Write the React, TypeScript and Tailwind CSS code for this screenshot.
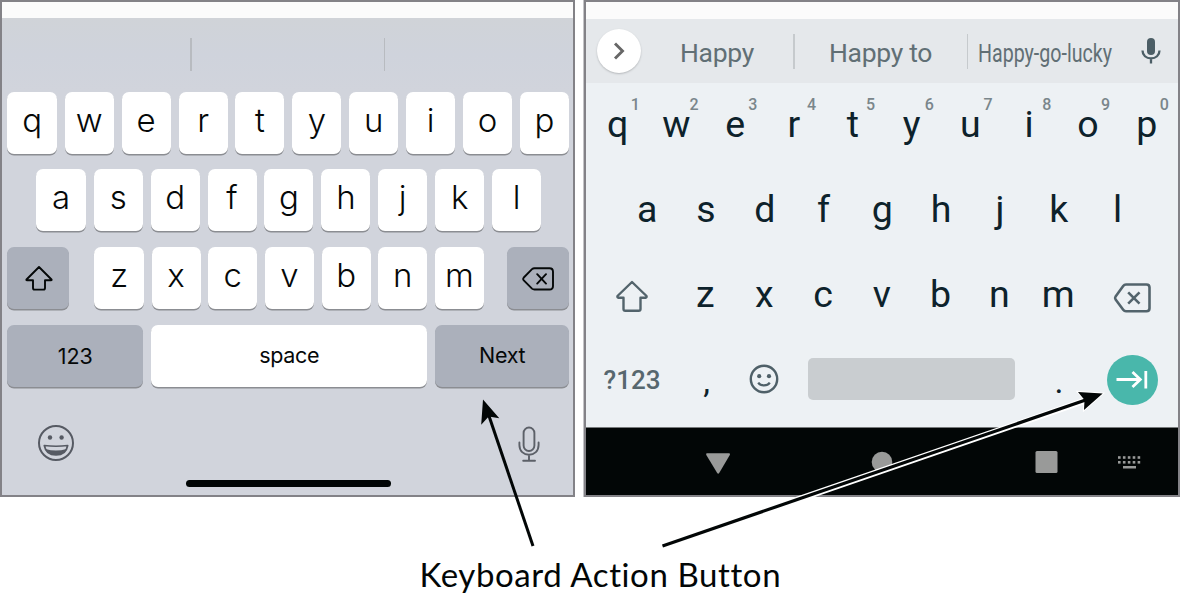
import React from "react";

type KeyProps = { children: React.ReactNode; className?: string; tone?: string };

function IosKey({ children, className = "", tone = "bg-white" }: KeyProps) {
  return (
    <div
      className={`h-[62px] shrink-0 rounded-[7px] text-center text-[#050808] shadow-[0_1.5px_0_#8b8d92] ${tone} ${className}`}
    >
      {children}
    </div>
  );
}

function IosLetter({ letter }: { letter: string }) {
  return (
    <IosKey className="w-[49px] text-[33px] leading-[57px] font-[350] first:w-[49.5px]">{letter}</IosKey>
  );
}

function IosKeyboard() {
  return (
    <section className="flex h-[497px] w-[575px] shrink-0 flex-col border-2 border-[#838287] bg-[#d1d4dc] font-['Inter',sans-serif]">
      <div className="h-4 shrink-0 bg-[#fbfbfb]" />
      <div className="flex h-[73.5px] shrink-0 bg-linear-to-b from-[#d0d3d8] via-[#cfd3dc] to-[#d1d4dc] pt-5 pl-[188px]">
        <div className="h-[33px] w-[1.5px] bg-[#b8bbc0]" />
        <div className="ml-[192px] h-[33px] w-[1.5px] bg-[#b8bbc0]" />
      </div>
      <div className="flex gap-[7.9px] pl-[5.4px]">
        {"qwertyuiop".split("").map((c) => (
          <IosLetter key={c} letter={c} />
        ))}
      </div>
      <div className="mt-[15.5px] flex gap-[7.9px] pl-[34.4px]">
        {"asdfghjkl".split("").map((c) => (
          <IosLetter key={c} letter={c} />
        ))}
      </div>
      <div className="mt-[15.5px] flex pl-[5.4px]">
        <IosKey tone="bg-[#abb0bb]" className="flex w-[62px] items-center justify-center">
          <svg width="28" height="25" viewBox="0 0 28 25" fill="none" stroke="#050808" strokeWidth="1.9" strokeLinejoin="round" className="mt-0.5 ml-0.5">
            <path d="M14 1 L26.5 13.5 Q27 14.3 26 14.3 H20 V22 Q20 23.6 18.4 23.6 H9.6 Q8 23.6 8 22 V14.3 H2 Q1 14.3 1.5 13.5 Z" />
          </svg>
        </IosKey>
        <div className="ml-[25px] flex gap-[7.7px]">
          {"zxcvbnm".split("").map((c) => (
            <IosLetter key={c} letter={c} />
          ))}
        </div>
        <IosKey tone="bg-[#abb0bb]" className="ml-[23.3px] flex w-[62px] items-center justify-center">
          <svg width="32" height="24" viewBox="0 0 32 24" fill="none" stroke="#050808" strokeWidth="1.9" strokeLinejoin="round" strokeLinecap="round" className="mt-0.5">
            <path d="M12.5 1.2 H27.5 Q31 1.2 31 4.7 V19 Q31 22.5 27.5 22.5 H12.5 Q11 22.5 10 21.6 L1.8 13.3 Q0.6 11.9 1.8 10.5 L10 2.1 Q11 1.2 12.5 1.2 Z M15.2 7.2 L24 16.6 M24 7.2 L15.2 16.6" />
          </svg>
        </IosKey>
      </div>
      <div className="mt-[16px] flex gap-2 pl-[5.4px] text-[21.5px]">
        <IosKey tone="bg-[#abb0bb]" className="w-[135.8px] leading-[62px]">123</IosKey>
        <IosKey className="w-[276px] leading-[60px] tracking-[-0.3px]">space</IosKey>
        <IosKey tone="bg-[#abb0bb]" className="w-[134px] leading-[60px] tracking-[-0.3px]">Next</IosKey>
      </div>
      <div className="flex shrink-0 justify-between pt-9 pr-[33px] pl-[35px]">
        <svg width="38" height="38" viewBox="0 0 38 38" fill="none" stroke="#565a63" strokeWidth="2" className="mt-px">
          <circle cx="19" cy="19" r="17" />
          <circle cx="13" cy="13.5" r="2.2" fill="#565a63" stroke="none" />
          <circle cx="24.6" cy="13.5" r="2.2" fill="#565a63" stroke="none" />
          <path d="M7.3 21.5 Q19 23 30.7 21.5 C29.5 28 25 31 19 31 C13 31 8.5 28 7.3 21.5 Z" strokeWidth="1.7" strokeLinejoin="round" />
          <path d="M8.5 25 Q19 28.2 29.5 25 C27.5 29.5 24 31 19 31 C14 31 10.5 29.5 8.5 25 Z" fill="#565a63" stroke="none" />
        </svg>
        <svg width="22" height="38" viewBox="0 0 22 38" fill="none" stroke="#5c6068" strokeWidth="1.9" strokeLinecap="round" className="mt-[3px]">
          <rect x="5.6" y="1.5" width="10.8" height="23.5" rx="5.4" />
          <path d="M1.4 16.5 V19 C1.4 25 5.5 28.7 11 28.7 C16.5 28.7 20.6 25 20.6 19 V16.5 M11 28.7 V34.7 M5.2 34.7 H17" />
        </svg>
      </div>
      <div className="mt-[16px] ml-[184px] h-[7px] w-[205px] shrink-0 rounded-full bg-[#020606]" />
    </section>
  );
}

function AndroidLetter({ letter, hint }: { letter: string; hint?: string }) {
  return (
    <div className="relative w-[58.8px] shrink-0 text-center text-[37.5px] leading-[44px]">
      {letter}
      {hint && (
        <span className="absolute top-[-19px] left-[42.5px] text-[16px] font-medium text-[#7a868b]">
          {hint}
        </span>
      )}
    </div>
  );
}

function AndroidKeyboard() {
  return (
    <section className="flex h-[497px] w-[596px] shrink-0 flex-col border-2 border-[#838287] bg-[#edf1f4] font-['Roboto',sans-serif] text-[#0d222b] shadow-[-1px_0_0_#c4c4c7]">
      <div className="h-[17px] shrink-0 bg-[#fbfbfb]" />
      <div className="flex h-16 shrink-0 bg-[#e5e8eb] text-[26.5px] leading-[67px] whitespace-nowrap text-[#616f75]">
        <div className="mt-[10px] ml-[11px] flex size-[44px] shrink-0 items-center justify-center rounded-full bg-white shadow-[0_1px_2px_#b5b8bb]">
          <svg width="12" height="18" viewBox="0 0 12 18" fill="none" stroke="#676767" strokeWidth="2.9">
            <path d="M2 1.5 L9.5 9 L2 16.5" />
          </svg>
        </div>
        <div className="w-[152px] shrink-0 text-center tracking-[-0.3px]">Happy</div>
        <div className="mt-[15px] h-[35px] w-[1.5px] shrink-0 bg-[#c6cacd]" />
        <div className="w-[172px] shrink-0 text-center tracking-[-0.3px]">Happy to</div>
        <div className="mt-[15px] h-[35px] w-[1.5px] shrink-0 bg-[#c6cacd]" />
        <div className="ml-[10px] w-[134px] shrink-0 origin-left scale-x-[0.74]">Happy-go-lucky</div>
        <svg width="20" height="27" viewBox="0 0 20 27" fill="none" stroke="#4c5e66" strokeWidth="2.3" className="mt-[18px] ml-[29px] shrink-0">
          <rect x="6" y="1" width="8" height="17" rx="4" fill="#4c5e66" stroke="none" />
          <path d="M1.5 13.5 C1.5 18.3 5.2 21.4 10 21.4 C14.8 21.4 18.5 18.3 18.5 13.5 M10 21 V26.5" />
        </svg>
      </div>
      <div className="mt-[19px] flex h-[44px] shrink-0 pl-[2.2px]">
        {"qwertyuiop".split("").map((c, i) => (
          <AndroidLetter key={c} letter={c} hint={String((i + 1) % 10)} />
        ))}
      </div>
      <div className="mt-[41px] flex h-[44px] shrink-0 pl-[31.8px]">
        {"asdfghjkl".split("").map((c) => (
          <AndroidLetter key={c} letter={c} />
        ))}
      </div>
      <div className="mt-[41px] flex h-[44px] shrink-0 pl-[29.5px]">
        <svg width="34" height="33" viewBox="0 0 34 33" fill="none" stroke="#53646c" strokeWidth="2.4" strokeLinejoin="round" className="mt-[8px] -ml-px">
          <path d="M17 2 L31.5 16 Q32 17.5 30.5 17.8 H25.5 V29 Q25.5 30.8 23.7 30.8 H10.3 Q8.5 30.8 8.5 29 V17.8 H3.5 Q2 17.5 2.5 16 Z" />
        </svg>
        <div className="ml-[27.5px] flex">
          {"zxcvbnm".split("").map((c) => (
            <AndroidLetter key={c} letter={c} />
          ))}
        </div>
        <svg width="38" height="30" viewBox="0 0 38 30" fill="none" stroke="#53646c" strokeWidth="2.6" strokeLinejoin="round" className="mt-[11px] ml-[25.8px]">
          <path d="M13 1.5 H33.5 Q36.5 1.5 36.5 4.5 V25.3 Q36.5 28.3 33.5 28.3 H13 Q11.3 28.3 10.2 26.8 L2.6 16.5 Q1.6 15 2.6 13.4 L10.2 3 Q11.3 1.5 13 1.5 Z M15.2 9.3 L26.5 20.7 M26.5 9.3 L15.2 20.7" />
        </svg>
      </div>
      <div className="mt-[37px] flex h-[74px] shrink-0">
        <div className="ml-[17.5px] w-[59px] shrink-0 pt-[5px] text-[26px] leading-[44px] font-medium text-[#57676e]">?123</div>
        <div className="w-[88px] shrink-0 text-center text-[34px] leading-[57px]">,</div>
        <svg width="30" height="30" viewBox="0 0 30 30" fill="none" stroke="#4f6068" strokeWidth="2.4" className="mt-[11px] -ml-[1.5px] shrink-0">
          <circle cx="15" cy="15" r="13.2" />
          <circle cx="10.2" cy="12.2" r="2.1" fill="#4f6068" stroke="none" />
          <circle cx="20" cy="12.2" r="2.1" fill="#4f6068" stroke="none" />
          <path d="M9.2 18.6 Q11 21.4 15 21.4 Q19 21.4 20.8 18.6" strokeWidth="2.2" />
        </svg>
        <div className="mt-[5px] ml-[29px] h-[42px] w-[207px] shrink-0 rounded-[5px] bg-[#c9cdd0]" />
        <div className="w-[88px] shrink-0 text-center text-[34px] leading-[57px]">.</div>
        <div className="mt-[1.5px] ml-[4px] flex size-[50.5px] shrink-0 items-center justify-center rounded-full bg-[#49b7ab]">
          <svg width="32" height="20" viewBox="0 0 32 20" fill="none" stroke="white" strokeWidth="2.8" className="mt-[1px]">
            <path d="M0.5 9.5 H25 M16.5 2 L24.3 9.5 L16.5 17 M29.8 1 V18.5" />
          </svg>
        </div>
      </div>
      <div className="flex flex-1 border-t border-[#777a7b] bg-[#020606]">
        <svg width="592" height="67" viewBox="0 0 592 67" fill="#999a99">
          <path d="M121 25.3 H143 Q144.7 25.3 143.8 27 L133.2 45 Q132.2 46.5 131.2 45 L120.3 27 Q119.5 25.3 121 25.3 Z" />
          <circle cx="296" cy="34" r="10.3" />
          <rect x="449.5" y="23" width="22" height="22" rx="1.5" />
          <g>
            {[0, 1, 2, 3, 4].map((i) => (
              <React.Fragment key={i}>
                <rect x={532 + i * 4.9} y="28.2" width="2.6" height="2.6" />
                <rect x={532 + i * 4.9} y="33" width="2.6" height="2.6" />
              </React.Fragment>
            ))}
            <rect x="537" y="38" width="13" height="2.5" />
          </g>
        </svg>
      </div>
    </section>
  );
}

export default function App() {
  return (
    <main className="relative h-[595px] w-[1180px] overflow-hidden bg-white">
      <div className="flex gap-[9px]">
        <IosKeyboard />
        <AndroidKeyboard />
      </div>
      <p className="mt-[58px] ml-[419.5px] font-['Lato',sans-serif] text-[33px] leading-[39px] tracking-[0.6px] whitespace-nowrap text-[#020606]">
        Keyboard Action Button
      </p>
      <svg width="1180" height="595" viewBox="0 0 1180 595" className="pointer-events-none absolute inset-0" fill="none">
        <path d="M533 546 L488 413" stroke="#020606" strokeWidth="3" />
        <path d="M483 399.5 L499.3 418.3 L488.7 416.5 L481.2 424.7 Z" fill="#020606" />
        <path d="M790 502.3 L1084 401" stroke="white" strokeWidth="6.2" />
        <path d="M1102.7 393.6 L1084 410 L1084.5 400 L1078 392 Z" fill="#020606" stroke="white" strokeWidth="2" />
        <path d="M662.5 546 L1090 398.5" stroke="#020606" strokeWidth="3.2" />
        <path d="M1102.7 393.6 L1084 410 L1084.5 400 L1078 392 Z" fill="#020606" />
      </svg>
    </main>
  );
}
